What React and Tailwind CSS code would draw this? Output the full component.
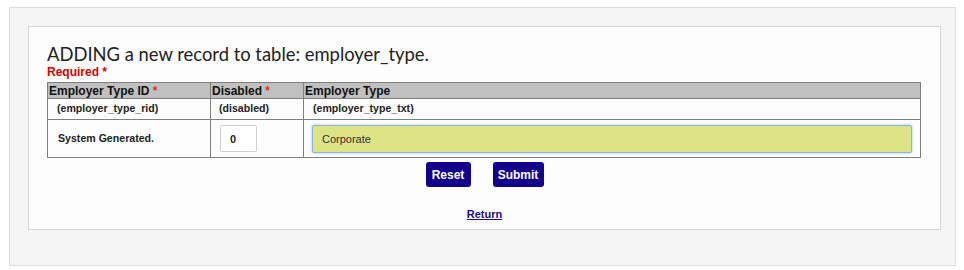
import React from 'react';

export default function App() {
  return (
    <div className="w-[964px] h-[270px] bg-white pt-[7px] pl-[9px]">
      <div className="w-[947px] h-[259px] bg-[#f5f5f5] border border-[#dcdcdc] pt-[18px] pl-[18px]">
        <div className="w-[913px] h-[204px] bg-[#fdfdfd] border border-[#d6d6d6] pt-[16px] px-[18px]">
          <h1 className="text-[18.4px] leading-[23px] text-[#222] font-['Lato',sans-serif] font-normal">
            ADDING a new record to table: employer_type.
          </h1>
          <div className="text-[12px] leading-[13px] font-bold text-[#d40000] font-['Liberation_Sans',Arial,sans-serif]">
            Required *
          </div>
          <table className="mt-[3px] w-[874px] border-collapse font-['Liberation_Sans',Arial,sans-serif] text-[#111]">
            <thead>
              <tr className="bg-[#c0c0c0] h-[16px]">
                <th className="w-[163px] border border-[#808080] text-left font-bold text-[12px] leading-[14px] px-[1px] py-0">
                  Employer Type ID <span className="text-[#e03030]">*</span>
                </th>
                <th className="w-[93px] border border-[#808080] text-left font-bold text-[12px] leading-[14px] px-[1px] py-0">
                  Disabled <span className="text-[#e03030]">*</span>
                </th>
                <th className="border border-[#808080] text-left font-bold text-[12px] leading-[14px] px-[1px] py-0">
                  Employer Type
                </th>
              </tr>
            </thead>
            <tbody>
              <tr className="h-[21px]">
                <td className="border border-[#808080] text-[10.6px] font-bold text-[#222] pl-[9px]">(employer_type_rid)</td>
                <td className="border border-[#808080] text-[10.6px] font-bold text-[#222] pl-[8px]">(disabled)</td>
                <td className="border border-[#808080] text-[10.6px] font-bold text-[#222] pl-[9px]">(employer_type_txt)</td>
              </tr>
              <tr className="h-[38px]">
                <td className="border border-[#808080] text-[10.6px] font-bold text-[#222] pl-[10px]">System Generated.</td>
                <td className="border border-[#808080] pl-[9px]">
                  <input
                    readOnly
                    value="0"
                    className="w-[37px] h-[27px] bg-white border border-[#cfcfcf] rounded-[2px] pl-[9px] text-[11px] font-bold text-[#222] outline-none"
                  />
                </td>
                <td className="border border-[#808080] pl-[8px] pr-[8px]">
                  <input
                    readOnly
                    value="Corporate"
                    className="w-full h-[28px] bg-[#dce485] border border-[#8ab4e8] shadow-[0_0_3px_#9cc4f0] rounded-[2px] pl-[9px] text-[11px] text-[#333] outline-none"
                  />
                </td>
              </tr>
            </tbody>
          </table>
          <div className="flex justify-center gap-[22px] mt-[4px] font-['Liberation_Sans',Arial,sans-serif]">
            <button className="w-[45px] h-[25px] bg-[#12008c] text-white text-[12px] font-bold rounded-[3px]">Reset</button>
            <button className="w-[51px] h-[25px] bg-[#12008c] text-white text-[12px] font-bold rounded-[3px]">Submit</button>
          </div>
          <div className="flex justify-center mt-[19px]">
            <a href="#" className="text-[11px] font-bold text-[#1a0d80] underline font-['Liberation_Sans',Arial,sans-serif]">Return</a>
          </div>
        </div>
      </div>
    </div>
  );
}
